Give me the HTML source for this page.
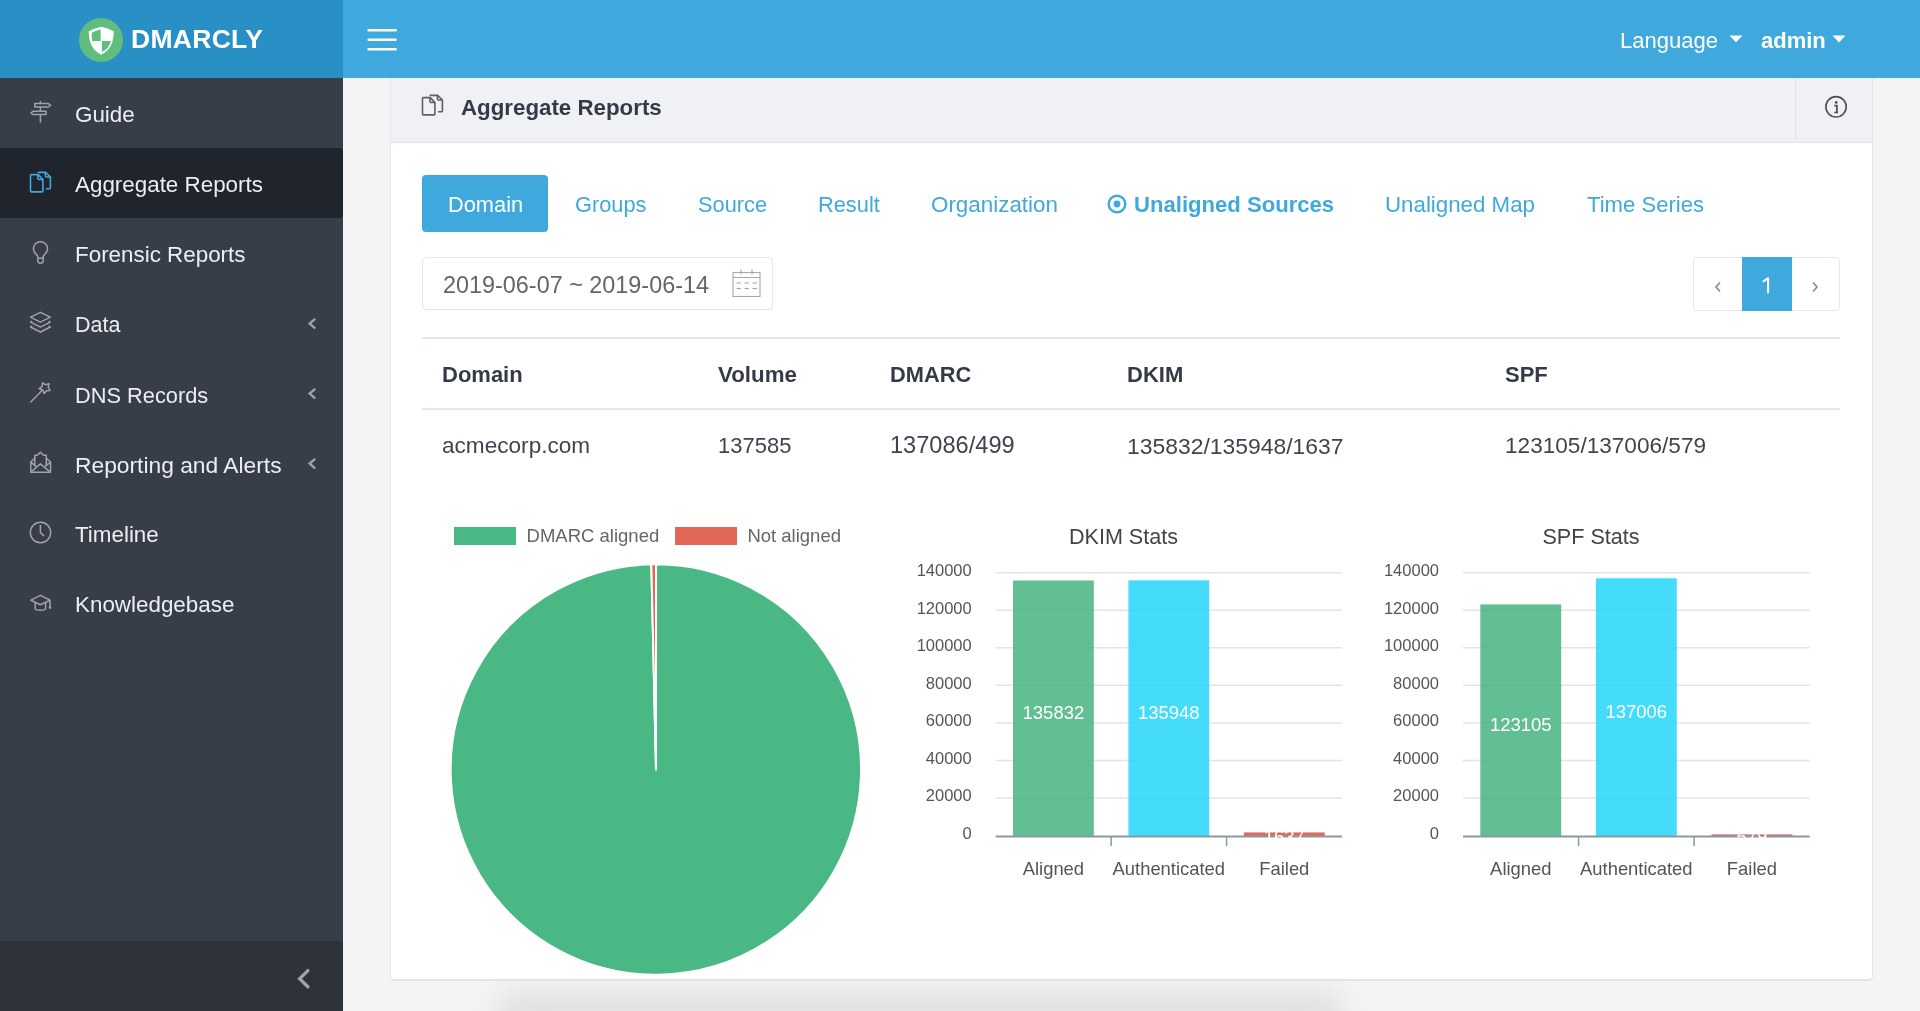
<!DOCTYPE html>
<html><head><meta charset="utf-8">
<style>
*{box-sizing:border-box;margin:0;padding:0}
html,body{width:1920px;height:1011px;overflow:hidden;background:#f4f4f4;font-family:"Liberation Sans",sans-serif}
.a{position:absolute}
.t{position:absolute;line-height:1;white-space:nowrap;will-change:transform}
#top{left:0;top:0;width:1920px;height:78px;background:#3fa9dd}
#logo{left:0;top:0;width:343px;height:78px;background:#2990c6}
#side{left:0;top:78px;width:343px;height:933px;background:#383d4a}
#sidebot{left:0;top:941px;width:343px;height:70px;background:#2e323b}
#active{left:0;top:148px;width:343px;height:70px;background:#20242c;border-radius:0 4px 4px 0}
.nav{color:#eceef0;font-size:22.4px}
.ic{position:absolute;stroke:#9a9ea6;fill:none;stroke-width:1.3}
#card{left:390px;top:78px;width:1483px;height:903px;background:#fff;border:1px solid #e3e5ec;border-bottom:2px solid #e2e3ea;border-top:none;border-radius:0 0 5px 5px}
#chead{left:391px;top:78px;width:1481px;height:65px;background:#f0f1f5;border-bottom:1px solid #e2e4eb}
#infodiv{left:1795px;top:78px;width:1px;height:62px;background:#e0e2e9}
.tab{color:#3fa9dd;font-size:21.8px}
.th{color:#343a47;font-weight:bold;font-size:22px}
.td{color:#3f4450;font-size:22px}
</style></head><body>
<div class="a" id="top"></div>
<div class="a" id="logo"></div>
<!-- logo -->
<svg class="a" style="left:79px;top:18px" width="44" height="44" viewBox="0 0 44 44">
  <circle cx="22" cy="22" r="22" fill="#5fbd7e"/>
  <path d="M22.25 8.8 Q28.5 10.2 34.7 13.2 C34.9 25 30.5 32.6 22.25 36.8 C14 32.6 9.6 25 9.8 13.2 Q16 10.2 22.25 8.8 Z" fill="#fff"/>
  <path d="M21.6 11.6 Q17 12.6 12.7 14.7 C12.6 17.8 12.8 20.6 13.3 23.1 L21.6 23.1 Z" fill="#5fbd7e"/>
  <path d="M22.9 23.1 L31.9 23.1 C30.8 28 27.8 31.7 22.9 34.1 Z" fill="#5fbd7e"/>
</svg>
<div class="t" style="left:131px;top:26px;font-size:26.5px;font-weight:bold;color:#fff;letter-spacing:0.3px">DMARCLY</div>
<!-- hamburger -->
<svg class="a" style="left:364px;top:24px" width="36" height="32" viewBox="0 0 36 32">
  <g stroke="#fff" stroke-width="2.6" stroke-linecap="round"><line x1="4.7" y1="6.2" x2="31.6" y2="6.2"/><line x1="4.7" y1="15.7" x2="31.6" y2="15.7"/><line x1="4.7" y1="25.3" x2="31.6" y2="25.3"/></g>
</svg>
<div class="t" style="left:1620px;top:30px;font-size:22px;color:#fff">Language</div>
<svg class="a" style="left:1729px;top:35px" width="14" height="8"><path d="M0.5 0.5 L13.5 0.5 L7 7.5Z" fill="#fff"/></svg>
<div class="t" style="left:1761px;top:30px;font-size:22px;color:#fff;font-weight:bold">admin</div>
<svg class="a" style="left:1832px;top:35px" width="14" height="8"><path d="M0.5 0.5 L13.5 0.5 L7 7.5Z" fill="#fff"/></svg>

<!-- sidebar -->
<div class="a" id="side"></div>
<div class="a" id="sidebot"></div>
<div class="a" id="active"></div>
<div class="t nav" style="left:75px;top:104px">Guide</div>
<div class="t nav" style="left:75px;top:174px">Aggregate Reports</div>
<div class="t nav" style="left:75px;top:244px">Forensic Reports</div>
<div class="t nav" style="left:75px;top:314.8px;font-size:21.5px">Data</div>
<div class="t nav" style="left:75px;top:384.5px;font-size:21.8px">DNS Records</div>
<div class="t nav" style="left:75px;top:453.7px;font-size:22.8px">Reporting and Alerts</div>
<div class="t nav" style="left:75px;top:524px">Timeline</div>
<div class="t nav" style="left:75px;top:594px">Knowledgebase</div>


<!-- sidebar icons -->
<svg class="a" style="left:24px;top:95px" width="36" height="35" viewBox="0 0 36 35"><g stroke="#9ea2ab" stroke-width="1.5" fill="none" stroke-linejoin="round" stroke-linecap="round">
 <path d="M10.8 8.6 H24.3 L26.6 10.3 L24.3 12 H10.8 Z"/>
 <path d="M22 16.3 H9 L6.8 18 L9 19.6 H22 Z"/>
 <path d="M16.4 6.6 V8.6 M16.4 12 V16.3 M16.4 19.6 V27"/>
</g></svg>
<svg class="a" style="left:24px;top:165px" width="36" height="35" viewBox="0 0 36 35"><g stroke="#3fa9dd" stroke-width="1.6" fill="none" stroke-linejoin="round" stroke-linecap="round">
 <path d="M14.3 9.6 L7.4 9.6 Q6.5 9.6 6.5 10.5 L6.5 26 Q6.5 26.9 7.4 26.9 L18 26.9 Q18.9 26.9 18.9 26 L18.9 14.6 Z"/>
 <path d="M13.9 9.8 L13.9 13.5 Q13.9 14.5 14.9 14.5 L18.7 14.5"/>
 <path d="M14.2 7.4 L21.6 7.4 L26.4 12 L26.4 23 Q26.4 23.8 25.6 23.8 L22.6 23.8"/>
 <path d="M21.4 7.6 L21.4 11 Q21.4 12 22.4 12 L26.2 12"/>
</g></svg>
<svg class="a" style="left:24px;top:235.8px" width="36" height="35" viewBox="0 0 36 35"><g stroke="#9ea2ab" stroke-width="1.5" fill="none" stroke-linejoin="round" stroke-linecap="round">
 <path d="M13.8 22.3 L13.8 20.6 Q13.4 19.2 11.8 17.9 A7 7 0 1 1 21.2 17.9 Q19.6 19.2 19.2 20.6 L19.2 22.3 Z"/>
 <path d="M13.8 22.3 V24.6 A2.7 2.7 0 0 0 19.2 24.6 V22.3"/>
</g></svg>
<svg class="a" style="left:24px;top:305px" width="36" height="35" viewBox="0 0 36 35"><g stroke="#9ea2ab" stroke-width="1.5" fill="none" stroke-linejoin="round" stroke-linecap="round">
 <path d="M6.5 12.2 L16.4 7.3 L26.3 12.2 L16.4 17.1 Z"/>
 <path d="M7.7 16.5 L6.5 17.2 L16.4 22.1 L26.3 17.2 L25.1 16.5"/>
 <path d="M7.7 21.3 L6.5 22 L16.4 27 L26.3 22 L25.1 21.3"/>
</g></svg>
<svg class="a" style="left:24px;top:375px" width="36" height="35" viewBox="0 0 36 35"><g stroke="#9ea2ab" stroke-width="1.5" fill="none" stroke-linejoin="round" stroke-linecap="round">
 <path d="M18.56 7.82 L21.55 9.73 L25.04 8.68 L24.23 12.31 L26.09 15.52 L22.50 15.68 L20.22 18.41 L18.79 15.04 L15.29 13.68 L18.13 11.35 Z"/>
 <path d="M17.8 15.8 L6.8 27"/>
</g></svg>
<svg class="a" style="left:24px;top:445px" width="36" height="35" viewBox="0 0 36 35"><g stroke="#9ea2ab" stroke-width="1.5" fill="none" stroke-linejoin="round" stroke-linecap="round">
 <path d="M6.8 17 L6.8 27.2 L26.5 27.2 L26.5 17 L22.3 13.2 M6.8 17 L10.8 13.2"/>
 <path d="M10.8 20.8 V10.3 H13.2 L16.4 7.4 L19.6 10.3 H22.3 V20.8"/>
 <path d="M7.2 26.8 L16.4 18.9 L26.1 26.8 M6.9 17.3 L11.6 20.9 M26.4 17.3 L21.6 20.9"/>
</g></svg>
<svg class="a" style="left:24px;top:515px" width="36" height="35" viewBox="0 0 36 35"><g stroke="#9ea2ab" stroke-width="1.5" fill="none" stroke-linejoin="round" stroke-linecap="round">
 <circle cx="16.5" cy="17.5" r="10.2"/>
 <path d="M16.4 10.6 V17.5 L19.6 20.6"/>
</g></svg>
<svg class="a" style="left:24px;top:585px" width="36" height="35" viewBox="0 0 36 35"><g stroke="#9ea2ab" stroke-width="1.5" fill="none" stroke-linejoin="round" stroke-linecap="round">
 <path d="M6.9 15.2 L16.4 10.3 L26 15.2 L16.4 19.8 Z"/>
 <path d="M11.2 18 V23.6 Q11.2 25.3 16.4 25.3 Q21.6 25.3 21.6 23.6 V18"/>
 <path d="M26 15.4 V22.3"/>
</g><circle cx="26" cy="22.6" r="1.3" fill="#9ea2ab"/></svg>
<!-- sidebar chevrons -->
<svg class="a" style="left:0;top:0" width="343" height="1011"><g stroke="#a0a4ad" stroke-width="2.3" fill="none" stroke-linejoin="miter" stroke-linecap="round">
 <path d="M314.6 319.4 L309.6 323.6 L314.6 327.8"/>
 <path d="M314.6 389.4 L309.6 393.6 L314.6 397.8"/>
 <path d="M314.6 459.4 L309.6 463.6 L314.6 467.8"/>
 <path d="M307.9 970.6 L299.6 978.7 L307.9 986.8" stroke-width="3.3"/>
</g></svg>
<!-- bottom shadow -->
<div class="a" style="left:495px;top:990px;width:850px;height:50px;border-radius:30px;background:#e1e1e1;filter:blur(13px)"></div>

<!-- CONTENT -->
<div class="a" id="card"></div>
<div class="a" id="chead"></div>
<div class="a" id="infodiv"></div>
<div class="t" style="left:461px;top:97px;font-size:22.3px;font-weight:bold;color:#343a47">Aggregate Reports</div>


<!-- tabs -->
<div class="a" style="left:422px;top:175px;width:126px;height:57px;background:#3fa9dd;border-radius:4px"></div>
<div class="t tab" style="left:448px;top:193.8px;color:#fff">Domain</div>
<div class="t tab" style="left:574.6px;top:193.8px">Groups</div>
<div class="t tab" style="left:697.6px;top:193.8px">Source</div>
<div class="t tab" style="left:818px;top:193.8px">Result</div>
<div class="t tab" style="left:930.7px;top:193.8px;font-size:22.4px">Organization</div>
<svg class="a" style="left:1106px;top:193px" width="22" height="22" viewBox="0 0 22 22"><circle cx="11" cy="11" r="8.3" stroke="#3fa9dd" stroke-width="2.4" fill="none"/><circle cx="11" cy="11" r="3.4" fill="#3fa9dd"/></svg>
<div class="t tab" style="left:1133.6px;top:193.6px;font-size:22.1px;font-weight:bold">Unaligned Sources</div>
<div class="t tab" style="left:1384.7px;top:193.8px;font-size:22.3px">Unaligned Map</div>
<div class="t tab" style="left:1586.6px;top:193.8px;font-size:22.1px">Time Series</div>

<!-- date picker -->
<div class="a" style="left:422px;top:257px;width:351px;height:53px;border:1px solid #e5e5e5;border-radius:4px;background:#fff"></div>
<div class="t" style="left:443.4px;top:274.2px;font-size:23.4px;color:#666">2019-06-07 ~ 2019-06-14</div>
<svg class="a" style="left:732px;top:269px" width="29" height="29" viewBox="0 0 29 29">
 <g stroke="#a8a8a8" stroke-width="1.1" fill="none">
  <rect x="1" y="3.5" width="27" height="24"/>
  <line x1="1" y1="8.5" x2="28" y2="8.5"/>
  <line x1="9" y1="0.5" x2="9" y2="5.5"/><line x1="20" y1="0.5" x2="20" y2="5.5"/>
  <line x1="4.5" y1="14" x2="9" y2="14"/><line x1="12.5" y1="14" x2="17" y2="14"/><line x1="20.5" y1="14" x2="25" y2="14"/>
  <line x1="4.5" y1="19.5" x2="9" y2="19.5"/><line x1="12.5" y1="19.5" x2="17" y2="19.5"/><line x1="20.5" y1="19.5" x2="25" y2="19.5"/>
 </g>
</svg>

<!-- pagination -->
<div class="a" style="left:1693px;top:257px;width:147px;height:54px;border:1px solid #e3e6ee;border-radius:4px;background:#fff"></div>
<div class="a" style="left:1742px;top:257px;width:50px;height:54px;background:#3fa9dd"></div>
<svg class="a" style="left:1742px;top:262px" width="50" height="44"><path d="M26.1 30.4 V16.2 L21.4 19.4" stroke="#fff" stroke-width="2" fill="none" stroke-linejoin="round" stroke-linecap="round"/></svg>
<svg class="a" style="left:1712px;top:280px" width="12" height="14"><path d="M8 2.5 L4 7 L8 11.5" stroke="#888" stroke-width="1.6" fill="none"/></svg>
<svg class="a" style="left:1809px;top:280px" width="12" height="14"><path d="M4 2.5 L8 7 L4 11.5" stroke="#888" stroke-width="1.6" fill="none"/></svg>

<!-- table -->
<div class="a" style="left:422px;top:337px;width:1418px;height:1.5px;background:#e3e8f0"></div>
<div class="a" style="left:422px;top:408px;width:1418px;height:1.5px;background:#e3e8f0"></div>
<div class="t th" style="left:442px;top:363.6px">Domain</div>
<div class="t th" style="left:717.8px;top:363.6px;font-size:22.3px">Volume</div>
<div class="t th" style="left:890.3px;top:363.6px;font-size:21.8px">DMARC</div>
<div class="t th" style="left:1127px;top:363.6px">DKIM</div>
<div class="t th" style="left:1504.6px;top:363.6px">SPF</div>
<div class="t td" style="left:442px;top:434.6px;font-size:22.6px">acmecorp.com</div>
<div class="t td" style="left:717.8px;top:434.6px;font-size:22px">137585</div>
<div class="t td" style="left:890.3px;top:434.1px;font-size:23.6px">137086/499</div>
<div class="t td" style="left:1127px;top:434.6px;font-size:22.9px">135832/135948/1637</div>
<div class="t td" style="left:1504.6px;top:434.6px;font-size:22.6px">123105/137006/579</div>


<!-- charts -->
<svg class="a" style="left:0;top:0;will-change:transform" width="1920" height="1011" viewBox="0 0 1920 1011">
<style>
text{font-family:"Liberation Sans",sans-serif}
.lg{font-size:18.5px;fill:#666}
.yl{font-size:16.5px;fill:#555}
.xl{font-size:18.4px;fill:#555}
.bl{font-size:18.5px;fill:#fff}
.ti{font-size:21.6px;fill:#444}
</style>
<rect x="454" y="527" width="62" height="18" fill="#4ab884"/>
<text x="526.6" y="542.3" class="lg">DMARC aligned</text>
<rect x="675" y="527" width="62" height="18" fill="#e26655"/>
<text x="747.4" y="542.3" class="lg">Not aligned</text>
<path d="M656 769.5 L656.00 564.30 A205.2 205.2 0 1 1 651.32 564.35 Z" fill="#4ab884" stroke="#fff" stroke-width="2" stroke-linejoin="round"/>
<path d="M656 769.5 L651.32 564.35 A205.2 205.2 0 0 1 656.00 564.30 Z" fill="#e26655" stroke="#fff" stroke-width="2" stroke-linejoin="round"/>
<line x1="995.7" y1="798.0" x2="1342" y2="798.0" stroke="#e4e4e4" stroke-width="1.5"/>
<text x="971.7" y="801.4" text-anchor="end" class="yl">20000</text>
<line x1="995.7" y1="760.4" x2="1342" y2="760.4" stroke="#e4e4e4" stroke-width="1.5"/>
<text x="971.7" y="763.8" text-anchor="end" class="yl">40000</text>
<line x1="995.7" y1="722.9" x2="1342" y2="722.9" stroke="#e4e4e4" stroke-width="1.5"/>
<text x="971.7" y="726.2" text-anchor="end" class="yl">60000</text>
<line x1="995.7" y1="685.3" x2="1342" y2="685.3" stroke="#e4e4e4" stroke-width="1.5"/>
<text x="971.7" y="688.7" text-anchor="end" class="yl">80000</text>
<line x1="995.7" y1="647.8" x2="1342" y2="647.8" stroke="#e4e4e4" stroke-width="1.5"/>
<text x="971.7" y="651.1" text-anchor="end" class="yl">100000</text>
<line x1="995.7" y1="610.2" x2="1342" y2="610.2" stroke="#e4e4e4" stroke-width="1.5"/>
<text x="971.7" y="613.6" text-anchor="end" class="yl">120000</text>
<line x1="995.7" y1="572.7" x2="1342" y2="572.7" stroke="#e4e4e4" stroke-width="1.5"/>
<text x="971.7" y="576.1" text-anchor="end" class="yl">140000</text>
<text x="971.7" y="838.7" text-anchor="end" class="yl">0</text>
<rect x="1013.0" y="580.5" width="80.8" height="255.5" fill="rgba(70,180,128,0.85)"/>
<text x="1053.4" y="718.7" text-anchor="middle" class="bl">135832</text>
<text x="1053.4" y="874.7" text-anchor="middle" class="xl">Aligned</text>
<rect x="1128.4" y="580.3" width="80.8" height="255.7" fill="rgba(36,214,250,0.85)"/>
<text x="1168.8" y="718.6" text-anchor="middle" class="bl">135948</text>
<text x="1168.8" y="874.7" text-anchor="middle" class="xl">Authenticated</text>
<rect x="1243.9" y="832.4" width="80.8" height="3.6" fill="#e26a5b"/>
<text x="1284.3" y="874.7" text-anchor="middle" class="xl">Failed</text>
<line x1="995.7" y1="836.6" x2="1342" y2="836.6" stroke="#8a98a4" stroke-width="2"/>
<line x1="1111.1" y1="836" x2="1111.1" y2="846" stroke="#8a98a4" stroke-width="1.5"/>
<line x1="1226.6" y1="836" x2="1226.6" y2="846" stroke="#8a98a4" stroke-width="1.5"/>
<text x="1284.3" y="842.5" text-anchor="middle" class="bl">1637</text>
<text x="1123.5" y="544" text-anchor="middle" class="ti">DKIM Stats</text>
<line x1="1463" y1="798.0" x2="1809.7" y2="798.0" stroke="#e4e4e4" stroke-width="1.5"/>
<text x="1439" y="801.4" text-anchor="end" class="yl">20000</text>
<line x1="1463" y1="760.4" x2="1809.7" y2="760.4" stroke="#e4e4e4" stroke-width="1.5"/>
<text x="1439" y="763.8" text-anchor="end" class="yl">40000</text>
<line x1="1463" y1="722.9" x2="1809.7" y2="722.9" stroke="#e4e4e4" stroke-width="1.5"/>
<text x="1439" y="726.2" text-anchor="end" class="yl">60000</text>
<line x1="1463" y1="685.3" x2="1809.7" y2="685.3" stroke="#e4e4e4" stroke-width="1.5"/>
<text x="1439" y="688.7" text-anchor="end" class="yl">80000</text>
<line x1="1463" y1="647.8" x2="1809.7" y2="647.8" stroke="#e4e4e4" stroke-width="1.5"/>
<text x="1439" y="651.1" text-anchor="end" class="yl">100000</text>
<line x1="1463" y1="610.2" x2="1809.7" y2="610.2" stroke="#e4e4e4" stroke-width="1.5"/>
<text x="1439" y="613.6" text-anchor="end" class="yl">120000</text>
<line x1="1463" y1="572.7" x2="1809.7" y2="572.7" stroke="#e4e4e4" stroke-width="1.5"/>
<text x="1439" y="576.1" text-anchor="end" class="yl">140000</text>
<text x="1439" y="838.7" text-anchor="end" class="yl">0</text>
<rect x="1480.3" y="604.4" width="80.9" height="231.6" fill="rgba(70,180,128,0.85)"/>
<text x="1520.8" y="730.6" text-anchor="middle" class="bl">123105</text>
<text x="1520.8" y="874.7" text-anchor="middle" class="xl">Aligned</text>
<rect x="1595.9" y="578.3" width="80.9" height="257.7" fill="rgba(36,214,250,0.85)"/>
<text x="1636.3" y="717.6" text-anchor="middle" class="bl">137006</text>
<text x="1636.3" y="874.7" text-anchor="middle" class="xl">Authenticated</text>
<rect x="1711.5" y="834.4" width="80.9" height="1.6" fill="#e26a5b"/>
<text x="1751.9" y="874.7" text-anchor="middle" class="xl">Failed</text>
<line x1="1463" y1="836.6" x2="1809.7" y2="836.6" stroke="#8a98a4" stroke-width="2"/>
<line x1="1578.6" y1="836" x2="1578.6" y2="846" stroke="#8a98a4" stroke-width="1.5"/>
<line x1="1694.1" y1="836" x2="1694.1" y2="846" stroke="#8a98a4" stroke-width="1.5"/>
<text x="1751.9" y="842.5" text-anchor="middle" class="bl">579</text>
<text x="1591" y="544" text-anchor="middle" class="ti">SPF Stats</text>
</svg>

<!-- card header icon -->
<svg class="a" style="left:416px;top:88px" width="36" height="35" viewBox="0 0 36 35"><g stroke="#5b606b" stroke-width="1.6" fill="none" stroke-linejoin="round" stroke-linecap="round">
 <path d="M14.3 9.6 L7.4 9.6 Q6.5 9.6 6.5 10.5 L6.5 26 Q6.5 26.9 7.4 26.9 L18 26.9 Q18.9 26.9 18.9 26 L18.9 14.6 Z"/>
 <path d="M13.9 9.8 L13.9 13.5 Q13.9 14.5 14.9 14.5 L18.7 14.5"/>
 <path d="M14.2 7.4 L21.6 7.4 L26.4 12 L26.4 23 Q26.4 23.8 25.6 23.8 L22.6 23.8"/>
 <path d="M21.4 7.6 L21.4 11 Q21.4 12 22.4 12 L26.2 12"/>
</g></svg>
<!-- info icon -->
<svg class="a" style="left:1816px;top:88px" width="40" height="40" viewBox="0 0 40 40">
 <circle cx="20.05" cy="18.8" r="10.2" stroke="#4a4f5a" stroke-width="1.6" fill="none"/>
 <circle cx="20.2" cy="14.4" r="1.35" fill="#4a4f5a"/>
 <path d="M18.3 17.6 H20.9 V24 M18.3 24.5 H22" stroke="#4a4f5a" stroke-width="1.7" fill="none"/>
</svg>
</body></html>
